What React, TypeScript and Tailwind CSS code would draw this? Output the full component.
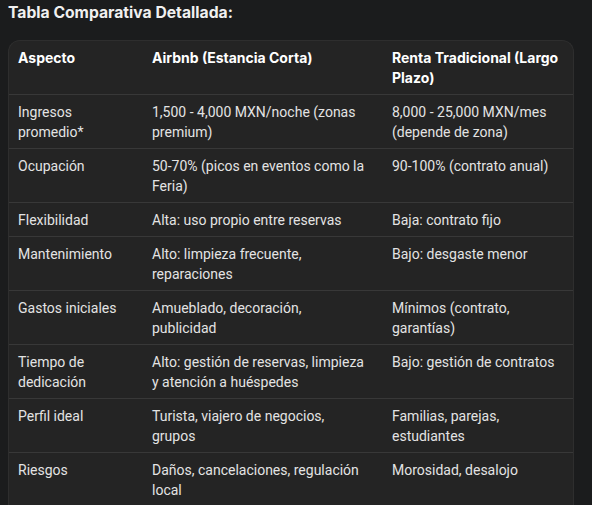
import React from "react";

const rows: [string, string, string][] = [
  ["Ingresos promedio*", "1,500 - 4,000 MXN/noche (zonas premium)", "8,000 - 25,000 MXN/mes (depende de zona)"],
  ["Ocupación", "50-70% (picos en eventos como la Feria)", "90-100% (contrato anual)"],
  ["Flexibilidad", "Alta: uso propio entre reservas", "Baja: contrato fijo"],
  ["Mantenimiento", "Alto: limpieza frecuente, reparaciones", "Bajo: desgaste menor"],
  ["Gastos iniciales", "Amueblado, decoración, publicidad", "Mínimos (contrato, garantías)"],
  ["Tiempo de dedicación", "Alto: gestión de reservas, limpieza y atención a huéspedes", "Bajo: gestión de contratos"],
  ["Perfil ideal", "Turista, viajero de negocios, grupos", "Familias, parejas, estudiantes"],
  ["Riesgos", "Daños, cancelaciones, regulación local", "Morosidad, desalojo"],
];

const bold = { fontFamily: "Inter, Roboto, sans-serif" };

export default function App() {
  return (
    <div
      className="w-[592px] h-[505px] overflow-hidden bg-[#1b1c1d] text-[#e3e3e3] pl-2 pr-[18px]"
      style={{ fontFamily: "Roboto, 'Noto Sans', sans-serif" }}
    >
      <h2 className="text-[15.7px] leading-[22px] font-bold text-[#f0f0f0] pt-[2px]" style={bold}>
        Tabla Comparativa Detallada:
      </h2>
      <div className="mt-[16px] rounded-t-[12px] bg-[#242424] overflow-hidden border border-[#2e2e2e] border-b-0">
        <table className="w-full border-collapse table-fixed text-[14px] leading-[20px]">
          <colgroup>
            <col className="w-[134px]" />
            <col className="w-[240px]" />
            <col />
          </colgroup>
          <thead>
            <tr className="border-b border-[#383838]">
              {["Aspecto", "Airbnb (Estancia Corta)", "Renta Tradicional (Largo Plazo)"].map((h, j) => (
                <th
                  key={j}
                  className="text-left align-top font-bold text-[14px] text-white pl-[9px] pr-[8px] pt-[7px] pb-[6px]"
                  style={bold}
                >
                  {h}
                </th>
              ))}
            </tr>
          </thead>
          <tbody>
            {rows.map((r, i) => (
              <tr key={i} className="border-b border-[#383838]">
                {r.map((c, j) => (
                  <td key={j} className="align-top pl-[9px] pr-[14px] pt-[7px] pb-[6px]">
                    {c}
                  </td>
                ))}
              </tr>
            ))}
          </tbody>
        </table>
      </div>
    </div>
  );
}
